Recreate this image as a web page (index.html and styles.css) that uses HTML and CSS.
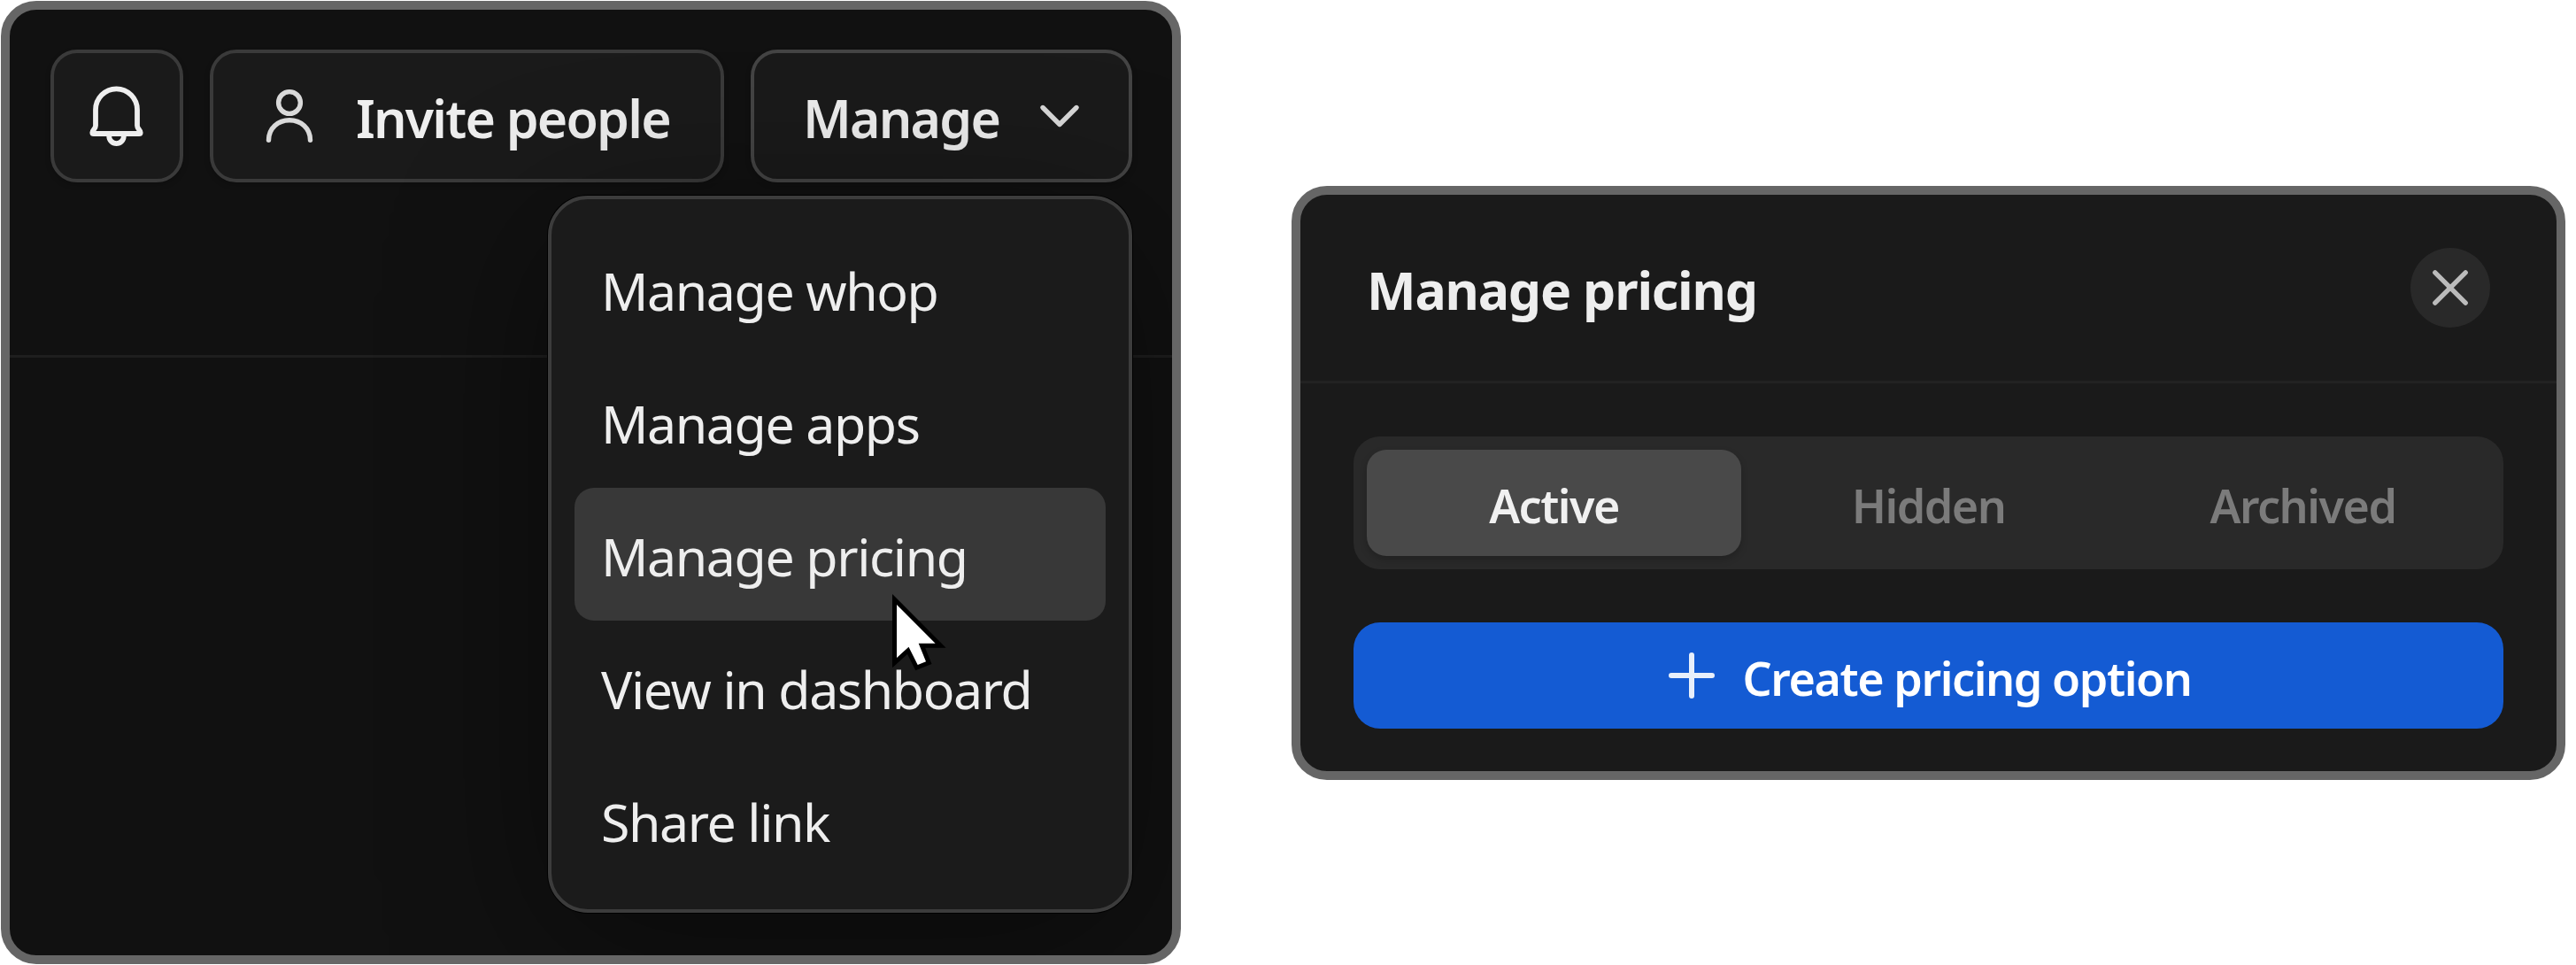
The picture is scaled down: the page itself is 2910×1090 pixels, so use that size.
FILE: index.html
```html
<!DOCTYPE html>
<html lang="en">
<head>
  <meta charset="UTF-8">
  <meta name="viewport" content="width=device-width, initial-scale=1.0">
  <title>Manage pricing</title>
  <link rel="stylesheet" href="styles.css">
</head>
<body>
  <!-- Whop header with open menu -->
  <section class="panel whop">
    <header class="toolbar">
      <button class="btn btn-bell" aria-label="Notifications">
        <svg width="90" height="90" viewBox="0 0 90 90">
          <path d="M44.5 14.3C31.5 14.3 21 25 21 38V56C21 59.5 17.3 61 17.3 63.7C17.3 64.6 18 65 18.8 65H70.2C71 65 71.7 64.6 71.7 63.7C71.7 61 68 59.5 68 56V38C68 25 57.5 14.3 44.5 14.3Z"/>
          <path d="M36.2 66V67.8A8.3 8.3 0 0 0 52.8 67.8V66"/>
        </svg>
      </button>
      <button class="btn btn-invite">
        <svg width="90" height="90" viewBox="0 0 90 90">
          <circle cx="45" cy="30" r="12.4"/>
          <path d="M21.5 72.3C21.5 59 32 49.8 45 49.8S68.5 59 68.5 72.3"/>
        </svg>
        <span class="label">Invite people</span>
      </button>
      <div class="manage">
        <button class="btn btn-manage">
          <span class="label">Manage</span>
          <svg width="60" height="60" viewBox="0 0 60 60">
            <path d="M11 20.5L30 39.5L49 20.5"/>
          </svg>
        </button>
        <ul class="menu">
          <li>Manage whop</li>
          <li>Manage apps</li>
          <li class="hover">Manage pricing</li>
          <li>View in dashboard</li>
          <li>Share link</li>
        </ul>
        <svg class="cursor" width="80" height="100" viewBox="0 0 80 100">
          <path d="M15 23L58.6 66.7H39.7L48 87.3L38.7 91L28.5 70.7L15 83Z"/>
        </svg>
      </div>
    </header>
  </section>

  <!-- Pricing dialog -->
  <section class="panel dialog">
    <header class="dialog-header">
      <h2>Manage pricing</h2>
      <button class="close" aria-label="Close">
        <svg width="90" height="90" viewBox="0 0 90 90">
          <path d="M27.8 27.8L62.2 62.2M62.2 27.8L27.8 62.2"/>
        </svg>
      </button>
    </header>
    <div class="dialog-body">
      <div class="tabs">
        <button class="tab active">Active</button>
        <button class="tab">Hidden</button>
        <button class="tab">Archived</button>
      </div>
      <button class="create">
        <svg width="52" height="60" viewBox="0 0 52 60">
          <path d="M26 7V53M3 30H49"/>
        </svg>
        <span>Create pricing option</span>
      </button>
    </div>
  </section>
</body>
</html>
```
FILE: styles.css
```css
* {
  box-sizing: border-box;
}

body {
  display: flex;
  align-items: flex-start;
  gap: 125px;
  margin: 0;
  padding: 1px;
  background: #fff;
  color: #eee;
  font-family: "Segoe UI", "Noto Sans", sans-serif;
  font-size: 59px;
}

button {
  margin: 0;
  padding: 0;
  border: 0;
  color: inherit;
  font: inherit;
}

svg {
  display: block;
  flex: none;
  fill: none;
  stroke: #d9d9d9;
  stroke-width: 5.4;
  stroke-linecap: round;
  stroke-linejoin: round;
}

.panel {
  flex: none;
  border: 10px solid #666;
  border-radius: 40px;
  overflow: hidden;
}

/* Left panel */
.whop {
  width: 1333px;
  height: 1088px;
  background: #111;
}

.toolbar {
  display: flex;
  gap: 30px;
  height: 393px;
  padding: 45px 45px 0 46px;
  border-bottom: 3px solid #1e1e1e;
}

.btn {
  display: flex;
  align-items: center;
  height: 150px;
  background: #1a1a1a;
  border: 4px solid #3a3a3a;
  border-radius: 30px;
  box-shadow: 0 3px 6px rgba(0, 0, 0, 0.2);
  font-weight: 600;
}

.btn-bell {
  width: 150px;
  justify-content: center;
}

.btn-bell svg {
  stroke: #eee;
  stroke-width: 5.8;
}

.btn-invite {
  width: 581px;
  padding-left: 41px;
  gap: 30px;
}

.label {
  padding-top: 4px;
  letter-spacing: -1.8px;
  white-space: nowrap;
}

.manage {
  position: relative;
}

.btn-manage {
  width: 431px;
  padding: 0 48px 0 55px;
  justify-content: space-between;
  border-color: #444;
}

.menu {
  position: absolute;
  top: 165px;
  right: 0;
  width: 660px;
  margin: 0;
  padding: 26px;
  list-style: none;
  background: #1b1b1b;
  border: 4px solid #3c3c3c;
  border-radius: 45px;
  box-shadow: 0 0 0 1px #000, 0 36px 180px rgba(0, 0, 0, 0.45);
}

.menu li {
  height: 150px;
  padding: 4px 0 0 30px;
  border-radius: 22px;
  line-height: 146px;
  letter-spacing: -1.4px;
  white-space: nowrap;
}

.menu .hover {
  background: #383838;
}

.cursor {
  position: absolute;
  top: 604px;
  left: 150px;
}

.cursor path {
  fill: #fff;
  stroke: #000;
  stroke-width: 10;
  stroke-linecap: butt;
  stroke-linejoin: miter;
  paint-order: stroke;
}

/* Right panel */
.dialog {
  width: 1439px;
  height: 671px;
  margin-top: 209px;
  background: #1a1a1a;
}

.dialog-header {
  display: flex;
  align-items: center;
  justify-content: space-between;
  height: 213px;
  padding: 0 75px;
  border-bottom: 3px solid #222;
}

.dialog-header h2 {
  margin: 0;
  padding-top: 4px;
  font-size: 59px;
  font-weight: 700;
  letter-spacing: -1.2px;
}

.close {
  width: 90px;
  height: 90px;
  background: #292929;
  border-radius: 50%;
}

.close svg {
  stroke: #bbb;
}

.dialog-body {
  display: flex;
  flex-direction: column;
  gap: 60px;
  padding: 60px 60px 48px;
  font-size: 52px;
  font-weight: 600;
}

.tabs {
  display: flex;
  height: 150px;
  padding: 15px;
  background: #292929;
  border-radius: 30px;
}

.tab {
  flex: 1;
  padding-top: 4px;
  background: none;
  border-radius: 22px;
  color: #7b7b7b;
  letter-spacing: -1.5px;
}

.tab.active {
  background: #494949;
  box-shadow: 0 4px 8px rgba(0, 0, 0, 0.2);
  color: #f1f1f1;
}

.create {
  display: flex;
  align-items: center;
  justify-content: center;
  gap: 32px;
  height: 120px;
  padding-left: 3px;
  background: #145bd3;
  border-radius: 30px;
  color: #fff;
  letter-spacing: -1.4px;
}

.create span {
  padding-top: 4px;
}

.create svg {
  stroke: #e8effb;
  stroke-width: 6;
}
```
